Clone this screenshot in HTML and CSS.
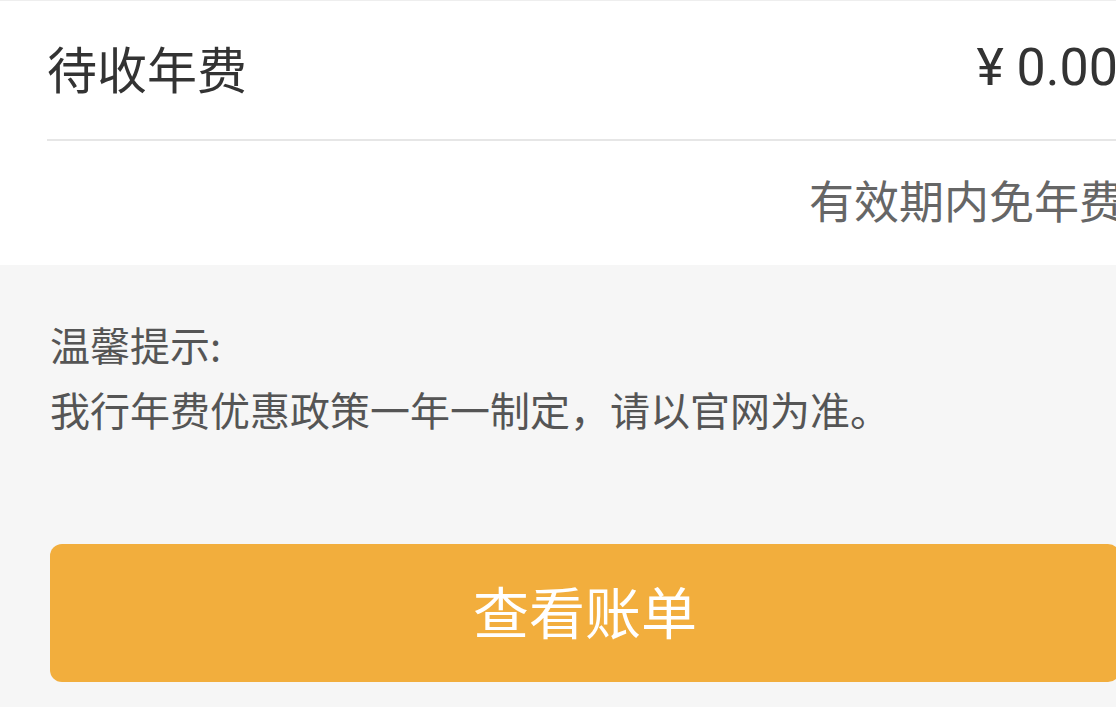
FILE: index.html
```html
<!DOCTYPE html>
<html lang="zh-CN">
<head>
<meta charset="utf-8">
<link rel="stylesheet" href="styles.css">
</head>
<body>
<div class="page">
  <section class="card">
    <div class="row row-main">
      <span class="label">待收年费</span>
      <span class="amount">¥ 0.00</span>
    </div>
    <div class="row row-sub">
      <span class="note">有效期内免年费</span>
    </div>
  </section>
  <section class="tips">
    <p class="tip-title">温馨提示:</p>
    <p class="tip-text">我行年费优惠政策一年一制定，请以官网为准。</p>
    <button class="btn">查看账单</button>
  </section>
</div>
</body>
</html>
```

FILE: styles.css
```css
html, body {
  margin: 0;
  padding: 0;
  background: #f6f6f6;
  overflow: hidden;
}
body {
  width: 1116px;
  height: 707px;
  font-family: "Noto Sans CJK SC", "Noto Sans", sans-serif;
}
.page {
  width: 1172px;
}
.card {
  background: #ffffff;
  border-top: 1px solid #eeeeee;
  padding-left: 47px;
}
.row {
  display: flex;
  align-items: center;
  padding-right: 48px;
  box-sizing: border-box;
}
.row-main {
  height: 140px;
  padding-bottom: 6px;
  justify-content: space-between;
  border-bottom: 2px solid #e6e6e6;
}
.label {
  font-size: 50px;
  color: #333333;
}
.amount {
  font-family: Roboto, "Noto Sans CJK SC", sans-serif;
  font-size: 52px;
  color: #333333;
  margin-right: 6px;
}
.row-sub {
  height: 124px;
  padding-bottom: 8px;
  justify-content: flex-end;
}
.note {
  font-size: 45px;
  color: #666666;
}
.tips {
  padding: 47px 52px 0 50px;
}
.tip-title, .tip-text {
  margin: 0;
  font-size: 40px;
  line-height: 65px;
  color: #555555;
}
.btn {
  display: block;
  width: 100%;
  height: 138px;
  margin-top: 102px;
  border: none;
  border-radius: 12px;
  background: #f2ae3d;
  color: #ffffff;
  font-family: "Noto Sans CJK SC", sans-serif;
  font-size: 56px;
  padding: 0 0 8px;
}
```
